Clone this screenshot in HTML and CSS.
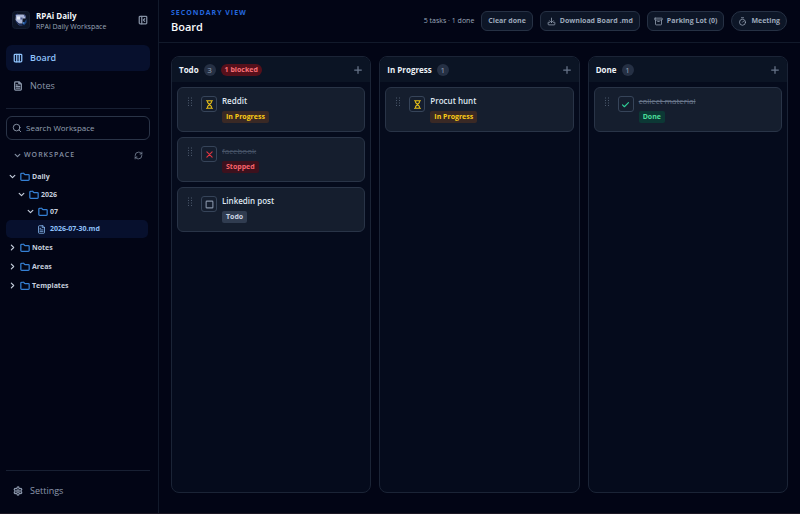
FILE: index.html
```html
<!DOCTYPE html>
<html lang="en">
<head>
<meta charset="utf-8">
<title>RPAi Daily</title>
<link rel="stylesheet" href="styles.css">
</head>
<body>
<svg class="sprite" aria-hidden="true">
  <symbol id="columns" viewBox="0 0 24 24"><rect x="3" y="3" width="18" height="18" rx="2"/><path d="M9 3v18M15 3v18"/></symbol>
  <symbol id="file" viewBox="0 0 24 24"><path d="M15 2H6a2 2 0 0 0-2 2v16a2 2 0 0 0 2 2h12a2 2 0 0 0 2-2V7zM14 2v5h6M8 9h2M8 13h8M8 17h8"/></symbol>
  <symbol id="panel" viewBox="0 0 24 24"><rect x="3" y="3" width="18" height="18" rx="2"/><path d="M9 3v18M16 15l-3-3 3-3"/></symbol>
  <symbol id="search" viewBox="0 0 24 24"><circle cx="11" cy="11" r="8"/><path d="m21 21-4.3-4.3"/></symbol>
  <symbol id="down" viewBox="0 0 24 24"><path d="m4 8 8 8 8-8"/></symbol>
  <symbol id="right" viewBox="0 0 24 24"><path d="m8 4 8 8-8 8"/></symbol>
  <symbol id="refresh" viewBox="0 0 24 24"><path d="M3 12a9 9 0 0 1 9-9 9.75 9.75 0 0 1 6.74 2.74L21 8M21 3v5h-5M21 12a9 9 0 0 1-9 9 9.75 9.75 0 0 1-6.74-2.74L3 16M8 16H3v5"/></symbol>
  <symbol id="folder" viewBox="0 0 24 24"><path d="M20 20a2 2 0 0 0 2-2V8a2 2 0 0 0-2-2h-7.9a2 2 0 0 1-1.7-.9L9.600 3.900A2 2 0 0 0 7.900 3H4a2 2 0 0 0-2 2v13a2 2 0 0 0 2 2z"/></symbol>
  <symbol id="gear" viewBox="0 0 24 24"><path d="M12.200 2h-.4a2 2 0 0 0-2 2v.2a2 2 0 0 1-1 1.700l-.4.3a2 2 0 0 1-2 0l-.2-.1a2 2 0 0 0-2.700.7l-.2.400a2 2 0 0 0 .7 2.700l.2.100a2 2 0 0 1 1 1.700v.5a2 2 0 0 1-1 1.700l-.2.100a2 2 0 0 0-.7 2.700l.2.400a2 2 0 0 0 2.700.7l.2-.1a2 2 0 0 1 2 0l.4.3a2 2 0 0 1 1 1.700v.2a2 2 0 0 0 2 2h.4a2 2 0 0 0 2-2v-.2a2 2 0 0 1 1-1.700l.4-.3a2 2 0 0 1 2 0l.2.100a2 2 0 0 0 2.700-.7l.2-.4a2 2 0 0 0-.7-2.700l-.2-.1a2 2 0 0 1-1-1.700v-.5a2 2 0 0 1 1-1.700l.2-.1a2 2 0 0 0 .7-2.700l-.2-.4a2 2 0 0 0-2.700-.7l-.2.100a2 2 0 0 1-2 0l-.4-.3a2 2 0 0 1-1-1.700V4a2 2 0 0 0-2-2z"/><circle cx="12" cy="12" r="3"/></symbol>
  <symbol id="download" viewBox="0 0 24 24"><path d="M12 3v12M7 10l5 5 5-5M7 14H4a1 1 0 0 0-1 1v4a2 2 0 0 0 2 2h14a2 2 0 0 0 2-2v-4a1 1 0 0 0-1-1h-3"/></symbol>
  <symbol id="archive" viewBox="0 0 24 24"><rect x="2" y="3" width="20" height="5" rx="1"/><path d="M4 8v11a2 2 0 0 0 2 2h12a2 2 0 0 0 2-2V8M10 12h4"/></symbol>
  <symbol id="timer" viewBox="0 0 24 24"><path d="M9 2h6M12 14l3-3"/><circle cx="12" cy="14" r="8"/></symbol>
  <symbol id="plus" viewBox="0 0 24 24"><path d="M4 12h16M12 4v16"/></symbol>
  <symbol id="grip" viewBox="0 0 12 20"><path d="M3 2h.01M9 2h.01M3 7h.01M9 7h.01M3 12h.01M9 12h.01M3 17h.01M9 17h.01"/></symbol>
  <symbol id="hourglass" viewBox="0 0 24 24"><path d="M4 22h16M4 2h16M17 22v-4.200a2 2 0 0 0-.6-1.400L12 12l-4.400 4.400A2 2 0 0 0 7 17.800V22M7 2v4.200a2 2 0 0 0 .6 1.400L12 12l4.400-4.400A2 2 0 0 0 17 6.200V2"/></symbol>
  <symbol id="cross" viewBox="0 0 24 24"><path d="M5 5l14 14M19 5 5 19"/></symbol>
  <symbol id="square" viewBox="0 0 24 24"><rect x="3" y="3" width="18" height="18" rx="2"/></symbol>
  <symbol id="check" viewBox="0 0 24 24"><path d="m4 13 5 5L20 7"/></symbol>
</svg>
<div class="app">
  <aside class="sidebar">
    <div class="brand">
      <svg class="logo" viewBox="0 0 18 18" aria-hidden="true">
        <rect x=".5" y=".5" width="17" height="17" rx="3" fill="#0d1526" stroke="#151e31"/>
        <path d="M4 3.500h7.500l2 2v2h-3v5H7L3.500 9z" fill="#a9b5d6"/>
        <path d="M5 5.500h3v3H5z" fill="#e3e8f5"/>
        <path d="M8.500 6.500h2v2h-2zM12 3l2 2v2l-2-2z" fill="#4c5b8c"/>
        <path d="M3 4.500 5.500 3M4 10l3 4h3.500" fill="none" stroke="#334681"/>
        <path d="M14.500 8v3.500l-2.500 3-1.500-2 2-1.500z" fill="#17417e"/>
        <circle cx="11.500" cy="12" r="1" fill="#3f7ac0"/>
      </svg>
      <div class="brand-text"><strong>RPAi Daily</strong><span>RPAi Daily Workspace</span></div>
      <button class="plain" aria-label="Collapse sidebar"><svg class="icon"><use href="#panel"/></svg></button>
    </div>
    <nav class="nav">
      <a class="active" href="#board"><svg class="icon"><use href="#columns"/></svg>Board</a>
      <a href="#notes"><svg class="icon"><use href="#file"/></svg>Notes</a>
    </nav>
    <div class="workspace">
      <label class="search"><svg class="icon"><use href="#search"/></svg><input type="search" placeholder="Search Workspace" aria-label="Search Workspace"></label>
      <div class="section">
        <button class="plain section-title"><svg class="chevron"><use href="#down"/></svg>WORKSPACE</button>
        <button class="plain" aria-label="Refresh"><svg class="icon small"><use href="#refresh"/></svg></button>
      </div>
      <div class="tree">
        <button class="row"><svg class="chevron"><use href="#down"/></svg><svg class="icon folder"><use href="#folder"/></svg>Daily</button>
        <div class="branch">
          <button class="row"><svg class="chevron"><use href="#down"/></svg><svg class="icon folder"><use href="#folder"/></svg>2026</button>
          <button class="row level-2"><svg class="chevron"><use href="#down"/></svg><svg class="icon folder"><use href="#folder"/></svg>07</button>
          <button class="row level-3 active"><svg class="icon small"><use href="#file"/></svg>2026-07-30.md</button>
        </div>
        <button class="row"><svg class="chevron"><use href="#right"/></svg><svg class="icon folder"><use href="#folder"/></svg>Notes</button>
        <button class="row"><svg class="chevron"><use href="#right"/></svg><svg class="icon folder"><use href="#folder"/></svg>Areas</button>
        <button class="row"><svg class="chevron"><use href="#right"/></svg><svg class="icon folder"><use href="#folder"/></svg>Templates</button>
      </div>
    </div>
    <div class="footer"><a href="#settings"><svg class="icon"><use href="#gear"/></svg>Settings</a></div>
  </aside>
  <main class="main">
    <header class="topbar">
      <div class="heading"><p>SECONDARY VIEW</p><h1>Board</h1></div>
      <div class="actions">
        <span class="summary">5 tasks · 1 done</span>
        <button class="action">Clear done</button>
        <button class="action"><svg class="icon small"><use href="#download"/></svg>Download Board .md</button>
        <button class="action"><svg class="icon small"><use href="#archive"/></svg>Parking Lot (0)</button>
        <button class="action pill"><svg class="icon small"><use href="#timer"/></svg>Meeting</button>
      </div>
    </header>
    <div class="board">
      <section class="column">
        <header><h2>Todo</h2><span class="count">3</span><span class="count blocked">1 blocked</span><button class="plain add" aria-label="Add to Todo"><svg class="icon"><use href="#plus"/></svg></button></header>
        <div class="cards">
          <article class="card"><svg class="grip"><use href="#grip"/></svg><button class="state progress" aria-label="In progress"><svg class="icon small"><use href="#hourglass"/></svg></button><div class="task"><h3>Reddit</h3><span class="tag progress">In Progress</span></div></article>
          <article class="card"><svg class="grip"><use href="#grip"/></svg><button class="state stopped" aria-label="Stopped"><svg class="icon small"><use href="#cross"/></svg></button><div class="task"><h3 class="struck dim">facebook</h3><span class="tag stopped">Stopped</span></div></article>
          <article class="card"><svg class="grip"><use href="#grip"/></svg><button class="state" aria-label="Todo"><svg class="icon small"><use href="#square"/></svg></button><div class="task"><h3>Linkedin post</h3><span class="tag">Todo</span></div></article>
        </div>
      </section>
      <section class="column">
        <header><h2>In Progress</h2><span class="count">1</span><button class="plain add" aria-label="Add to In Progress"><svg class="icon"><use href="#plus"/></svg></button></header>
        <div class="cards">
          <article class="card"><svg class="grip"><use href="#grip"/></svg><button class="state progress" aria-label="In progress"><svg class="icon small"><use href="#hourglass"/></svg></button><div class="task"><h3>Procut hunt</h3><span class="tag progress">In Progress</span></div></article>
        </div>
      </section>
      <section class="column">
        <header><h2>Done</h2><span class="count">1</span><button class="plain add" aria-label="Add to Done"><svg class="icon"><use href="#plus"/></svg></button></header>
        <div class="cards">
          <article class="card"><svg class="grip"><use href="#grip"/></svg><button class="state done" aria-label="Done"><svg class="icon small"><use href="#check"/></svg></button><div class="task"><h3 class="struck">collect material</h3><span class="tag done">Done</span></div></article>
        </div>
      </section>
    </div>
  </main>
</div>
</body>
</html>
```
FILE: styles.css
```css
* { box-sizing: border-box; }
body { margin: 0; background: #020515; color: #dbe3ee; font: 9px/12px "Open Sans", "Noto Sans", sans-serif; }
h1, h2, h3, p { margin: 0; }
button, input { font: inherit; color: inherit; }
button { cursor: pointer; }
a { color: inherit; text-decoration: none; }
.sprite { display: none; }
.icon, .chevron, .grip { flex: none; width: 10px; height: 10px; fill: none; stroke: currentColor; stroke-width: 2; stroke-linecap: round; stroke-linejoin: round; }
.icon { stroke-width: 3; }
.icon.small { width: 9px; height: 9px; }
.chevron { width: 7px; height: 7px; stroke-width: 4; }
.plain { display: flex; align-items: center; padding: 0; border: 0; background: none; color: #8490a3; }

.app { display: grid; grid-template-columns: 159px 1fr; min-height: 100vh; border-bottom: 1px solid #1b1724; }
.sidebar { display: flex; flex-direction: column; border-right: 1px solid #121a2b; padding: 0 8px 0 6px; }
.brand { display: flex; align-items: center; gap: 6px; height: 42px; padding: 0 2px 2px 6px; }
.logo { width: 18px; height: 18px; flex: none; }
.brand-text { flex: 1; display: flex; flex-direction: column; font-size: 7px; line-height: 9px; color: #9aa5b8; white-space: nowrap; }
.brand-text strong { font-size: 8px; line-height: 12px; color: #f4f7fb; }
.nav { display: flex; flex-direction: column; gap: 2px; padding: 3px 0 9px; border-bottom: 1px solid #182033; }
.nav a, .footer a { display: flex; align-items: center; gap: 7px; height: 26px; padding: 0 7px; border-radius: 6px; color: #8c98ac; }
.nav .active { background: #07102d; color: #8fc2fb; font-weight: 600; }
.workspace { flex: 1; padding-top: 7px; }
.search { display: flex; align-items: center; gap: 4px; height: 24px; padding: 0 5px; border: 1px solid #2a3447; border-radius: 6px; font-size: 8px; color: #9aa6b8; }
.search .icon { stroke-width: 2; }
.search input { flex: 1; min-width: 0; padding: 0; border: 0; outline: 0; background: none; }
.search input::placeholder { color: #95a1b3; opacity: 1; }
.section { display: flex; justify-content: space-between; align-items: center; height: 24px; margin-top: 3px; padding: 0 7px 0 8px; }
.section .icon { stroke-width: 2; }
.section-title { gap: 3px; font-size: 7px; font-weight: 600; letter-spacing: 1px; }
.tree { display: flex; flex-direction: column; }
.row { display: flex; align-items: center; gap: 4px; width: 100%; height: 19px; padding: 0 3px; border: 0; border-radius: 5px; background: none; font-size: 7px; font-weight: 700; white-space: nowrap; color: #c6cfdd; }
.branch .row { height: 17px; padding-left: 12px; }
.branch .level-2 { padding-left: 21px; }
.branch .level-3 { height: 18px; padding-left: 31px; }
.row .folder { margin-right: -2px; color: #3580d4; }
.row.active { width: 142px; background: #07102d; color: #8fc2fb; }
.row .small { stroke-width: 2; }
.footer { padding: 7px 0 9px; border-top: 1px solid #182033; }

.main { display: flex; flex-direction: column; min-width: 0; }
.topbar { display: flex; align-items: center; justify-content: space-between; height: 43px; padding: 0 13px 2px 12px; border-bottom: 1px solid #121a2b; }
.heading p { font-size: 7px; line-height: 12px; font-weight: 700; letter-spacing: 1px; color: #2467df; }
.heading h1 { font-size: 11px; line-height: 15px; font-weight: 600; color: #f8fafc; }
.actions { display: flex; align-items: center; gap: 7px; padding-top: 2px; font-size: 7px; white-space: nowrap; color: #9ca8ba; }
.action { display: flex; align-items: center; gap: 4px; height: 20px; padding: 0 6px; border: 1px solid #263144; border-radius: 6px; background: #0d1627; font-weight: 700; }
.action .icon { stroke-width: 2; }
.pill { border-radius: 10px; }

.board { flex: 1; display: grid; grid-template-columns: repeat(3, minmax(0, 1fr)); gap: 8px; padding: 13px 12px 20px; }
.column { border: 1px solid #1b2436; border-radius: 8px; background: #050b1c; overflow: hidden; }
.column header { display: flex; align-items: center; gap: 5px; height: 25px; padding: 0 7px; background: #0b1424; }
.column h2 { font-size: 8px; font-weight: 700; line-height: 12px; color: #edf2f8; }
.count { min-width: 12px; padding: 0 3px; border-radius: 6px; background: #253044; color: #95a2b5; font-size: 8px; line-height: 12px; text-align: center; }
.count.blocked { padding: 0 4px; background: #56101b; color: #fa7178; font-size: 7px; font-weight: 700; }
.add { margin-left: auto; color: #68758a; }
.cards { display: flex; flex-direction: column; gap: 5px; padding: 5px; }
.card { display: flex; align-items: flex-start; height: 45px; padding: 7px 9px; border: 1px solid #293447; border-radius: 6px; background: #151e2e; }
.grip { width: 6px; height: 10px; margin: 2px 8px 0 0; color: #5a687d; }
.state { display: flex; align-items: center; justify-content: center; width: 16px; height: 16px; margin: 1px 5px 0 0; padding: 0; border: 1px solid #364459; border-radius: 3px; background: none; color: #8592a6; }
.state.progress { color: #e4bd18; }
.state.stopped { color: #e0343f; }
.state.done { color: #2fcf98; }
.task { display: flex; flex-direction: column; align-items: flex-start; gap: 4px; }
.task h3 { font-size: 8px; font-weight: 600; line-height: 12px; color: #dfe6f0; }
.task .struck { font-weight: 400; text-decoration: line-through; color: #68758a; }
.task .dim { color: #465367; }
.tag { padding: 0 4px; border-radius: 2px; background: #303c50; color: #ccd5e2; font-size: 7px; font-weight: 700; line-height: 12px; }
.tag.progress { background: #3a2925; color: #facc15; }
.tag.stopped { background: #3d111d; color: #f8646b; }
.tag.done { background: #0c3835; color: #4ade9a; }
```
